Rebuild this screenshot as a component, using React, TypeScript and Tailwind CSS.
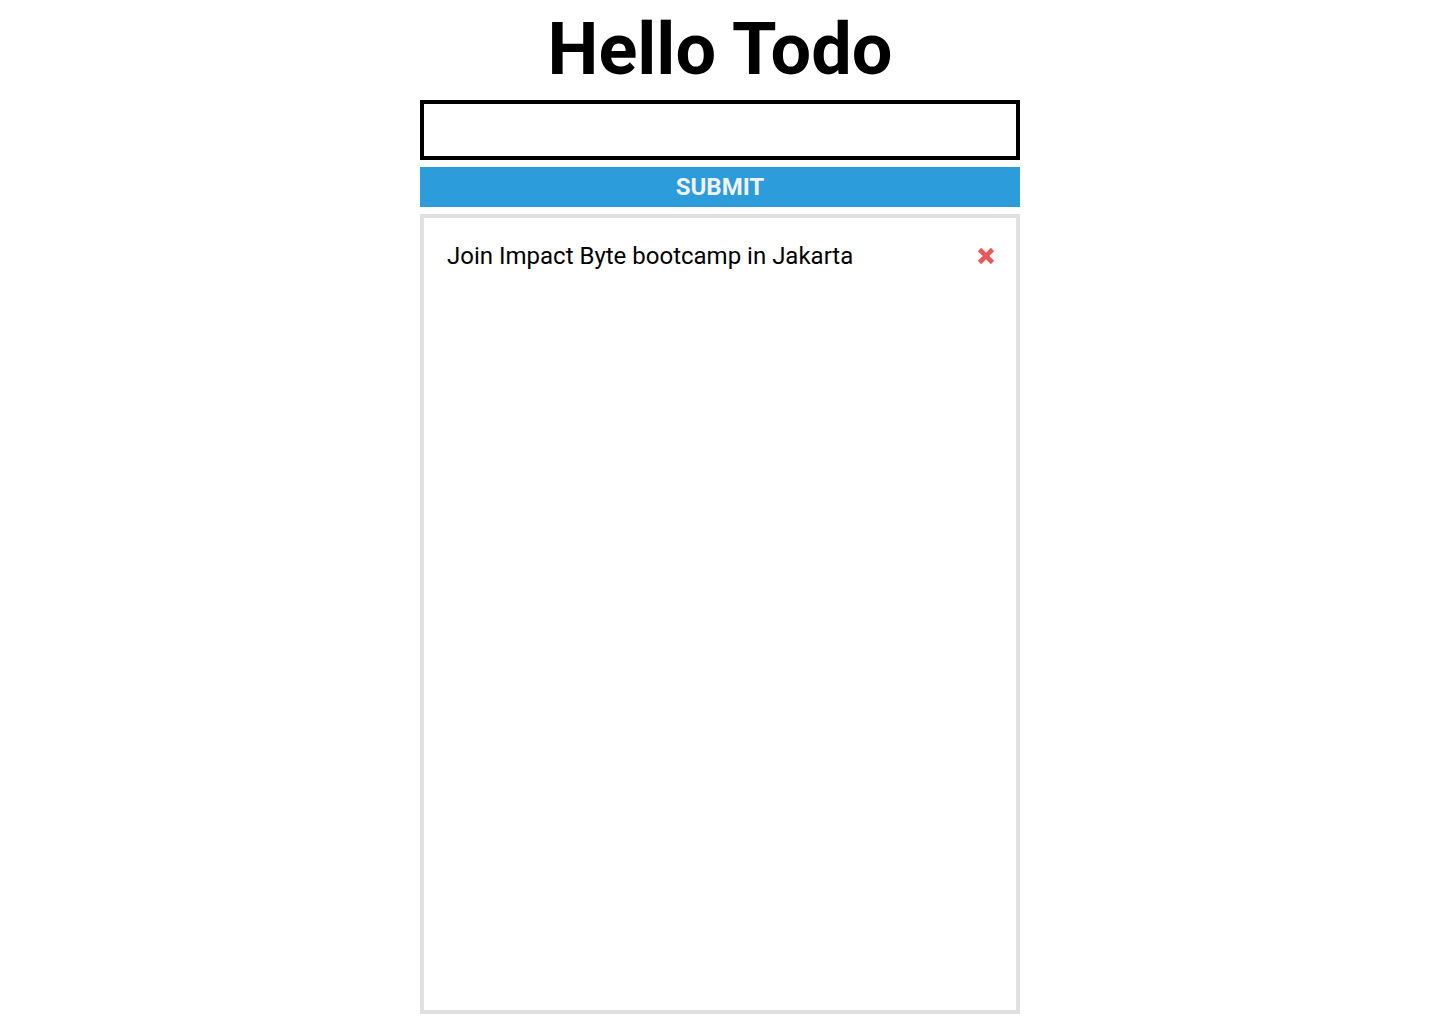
const todos = ['Join Impact Byte bootcamp in Jakarta']

function CrossIcon() {
  return (
    <svg width="18" height="18" viewBox="0 0 18 18" className="shrink-0">
      <path d="M2.5 2.5 L15.5 15.5 M15.5 2.5 L2.5 15.5" stroke="#eb5757" strokeWidth="4.6" strokeLinecap="butt" />
    </svg>
  )
}

export default function App() {
  return (
    <div className="min-h-screen bg-white font-['Roboto',sans-serif] text-black">
      <div className="mx-auto w-[600px] pt-[10px]">
        <h1 className="text-center text-[72px] font-bold leading-[80px]">Hello Todo</h1>
        <form className="mt-[10px] flex flex-col gap-[7px]" onSubmit={(e) => e.preventDefault()}>
          <input type="text" className="h-[60px] w-full border-4 border-black px-3 text-xl outline-none" />
          <button type="submit" className="h-10 w-full bg-[#2d9cdb] text-[24px] font-bold leading-10 text-[#f2f2f2]">
            SUBMIT
          </button>
        </form>
        <ul className="mt-[7px] h-[800px] border-4 border-[#e0e0e0] pl-[23px] pr-[21px] pt-[20px]">
          {todos.map((todo) => (
            <li key={todo} className="flex items-center justify-between">
              <span className="text-[24px] leading-[36px]">{todo}</span>
              <CrossIcon />
            </li>
          ))}
        </ul>
      </div>
    </div>
  )
}
